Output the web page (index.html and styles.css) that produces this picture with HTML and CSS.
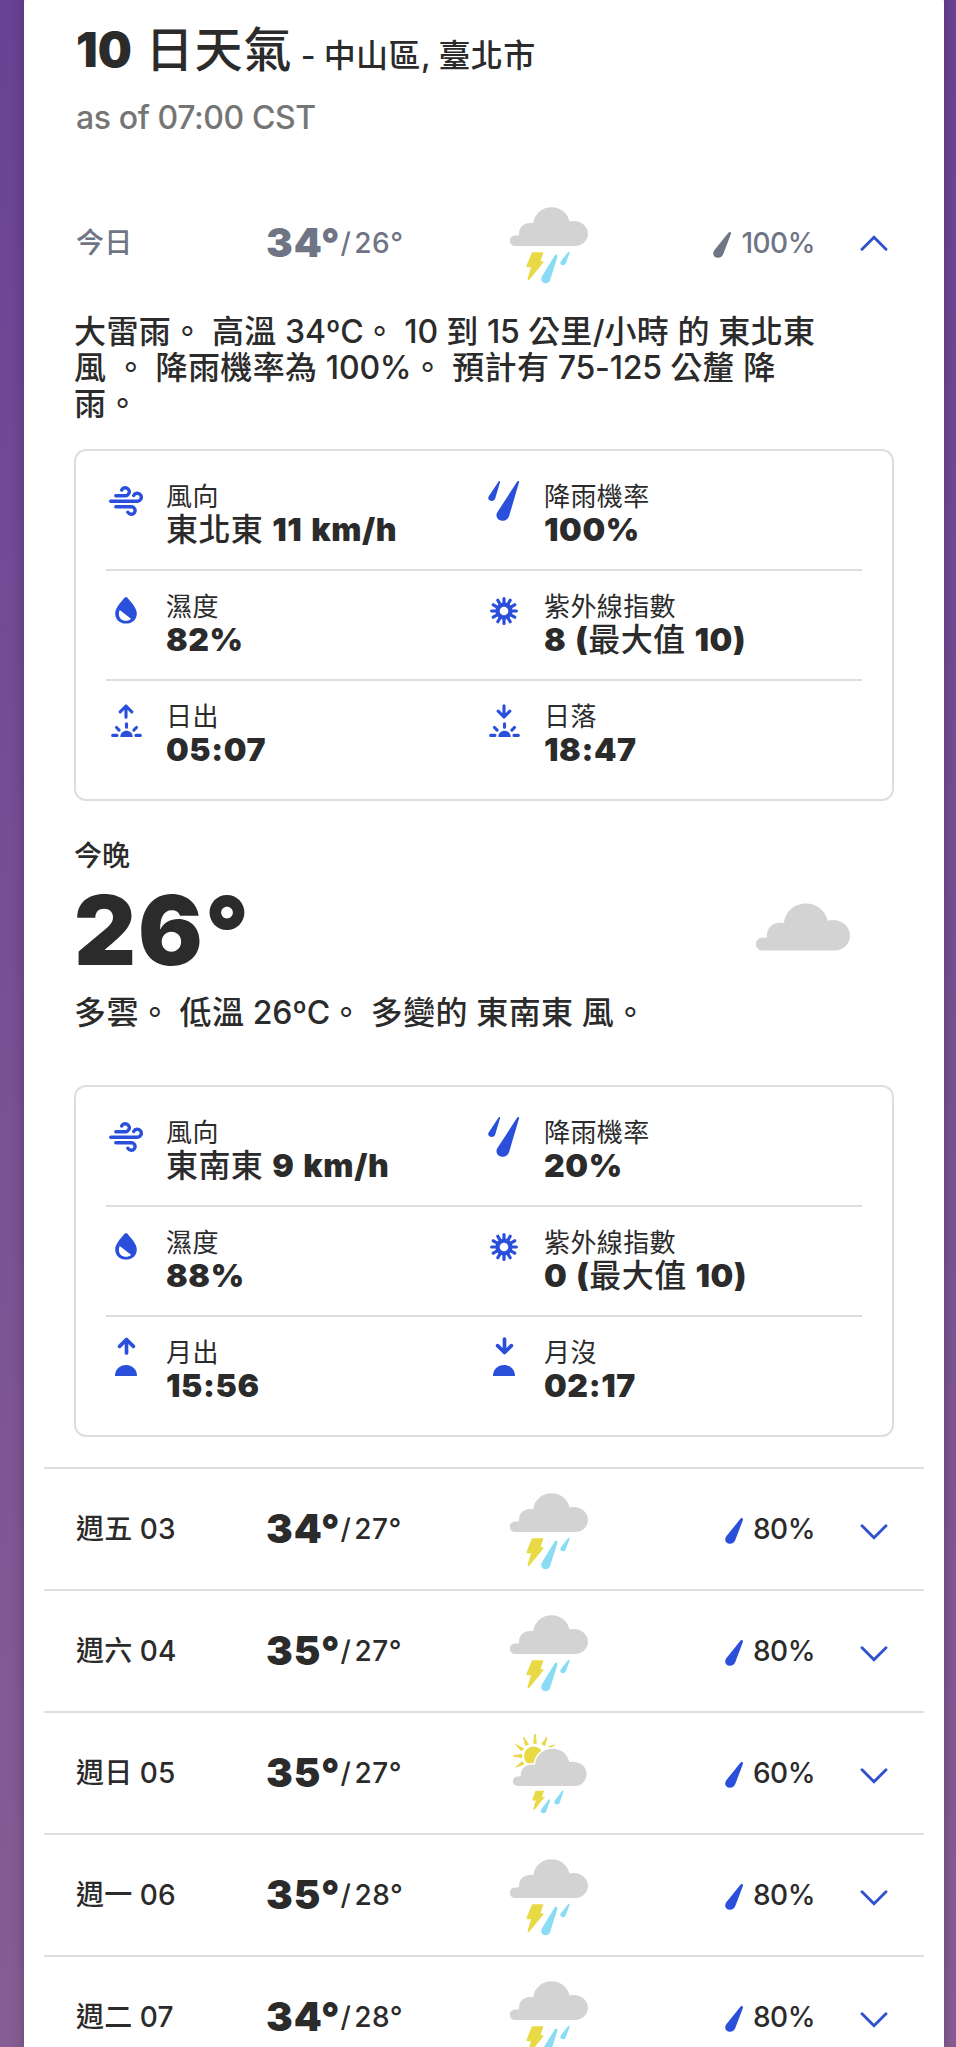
FILE: index.html
```html
<!DOCTYPE html>
<html lang="zh-TW">
<head>
<meta charset="utf-8">
<title>10 日天氣</title>
<link rel="stylesheet" href="styles.css">
</head>
<body>
<svg class="sprite" aria-hidden="true">
  <symbol id="i-storm" viewBox="0 0 78 78">
    <path class="c-cloud" d="M5 39a5.200 5.200 0 0 1 0-10.400c1 0 3-.5 4.200-.3C8 20.500 14 14.600 23.300 16.300 24 7.500 31.500.2 41.500.2c9 0 16 5.600 18 14.200C69.500 12 78 18.500 78 26.600 78 33.500 72.500 39 65.500 39z"/>
    <path class="c-bolt" d="M21.500 46.500a1.500 1.500 0 0 1 1.500-1.200h10.500l-3 9h2.200c.8 0 1 .8.500 1.500L19.500 72.500c-1 1.200-2.200.6-1.900-.8l3.400-11.500h-3c-1.200 0-1.700-.8-1.400-1.800z"/>
    <path class="c-rain" d="M47.300 50.200c.5-3-1.700-3.300-2.800-1.500L32 69.200c-2 3.600.2 7 3.600 7 2.200 0 3.700-1.200 4.500-3.300z"/>
    <path class="c-rain" d="M59.600 46c.3-1.600-1-1.700-1.600-.7L51 54c-1.500 2.200-.3 4.200 2 4.200 1.400 0 2.200-.7 2.700-1.800z"/>
  </symbol>
  <symbol id="i-sunstorm" viewBox="0 0 78 82">
    <g class="c-bolt">
      <circle cx="23.500" cy="22" r="9.500"/>
      <path d="M23.800 9.500h2.400L25.500.5h-1zM13.500 3l2 8.500 3-1.200zM36.800 3l-5 7 3 1.600zM5.500 10.500l6 6.500 2-2.400zM3 22l8.700 1.500v-3.200zM5.700 33.200l8.300-3-1.800-2.600zM44.500 11l-6 1.600 2 1z" stroke="#e8da45" stroke-width="1"/>
    </g>
    <path fill="#d3d3d3" stroke="#fff" stroke-width="3" paint-order="stroke" d="M7.500 52a4.700 4.700 0 0 1 0-9.400c1 0 2.200-.4 3.400-.3C10 35 16 29.200 25 30.800 26 21 33.500 14.800 42.500 14.800c8.500 0 15 5.200 16.800 13.300C68.800 26 76.600 32 76.600 39.800 76.600 46.800 71.500 52 65 52z"/>
    <path class="c-bolt" d="M25.500 56.800h8.500l-2 6.200h2.800L24.500 75.800l-1.400-.6 2.800-8.700h-3.900z"/>
    <path class="c-rain" d="M40.100 66.500c.3-1.600-1-1.700-1.600-.7L31.500 75c-1.500 2.200-.3 4.200 2 4.200 1.400 0 2.200-.7 2.700-1.800zM53.500 57.800c.3-1.600-1-1.700-1.600-.7L45 66.300c-1.500 2.200-.3 4.200 2 4.200 1.400 0 2.200-.7 2.700-1.800z"/>
  </symbol>
  <symbol id="i-cloud" viewBox="0 0 78 39.200">
    <path class="c-cloud" d="M5 39a5.200 5.200 0 0 1 0-10.400c1 0 3-.5 4.200-.3C8 20.500 14 14.600 23.300 16.300 24 7.500 31.500.2 41.500.2c9 0 16 5.600 18 14.200C69.500 12 78 18.500 78 26.600 78 33.500 72.500 39 65.500 39z"/>
  </symbol>
  <symbol id="i-drop" viewBox="0 0 18 26">
    <path fill="currentColor" d="M17.900 2c.5-2-1.500-2.600-2.700-.9L1.300 18.200C-1.200 22 .8 25.700 5 25.700c2.700 0 4.300-1.300 5.300-3.700z"/>
  </symbol>
  <symbol id="i-rain" viewBox="0 0 32 40">
    <path fill="currentColor" d="M31.100 1.200c.3-1.400-1.200-1.600-1.900-.6L9.300 31.300c-2.400 4 .5 8.500 5.500 8.500 3 0 5.300-1.700 6.300-4.700zM12.100 1c.2-1.100-1-1.100-1.500-.5L.8 15.200c-1.600 2.400.1 4.800 2.900 4.800 1.800 0 3-.9 3.500-2.400z"/>
  </symbol>
  <symbol id="i-wind" viewBox="0 0 34 30">
    <g fill="none" stroke="currentColor" stroke-width="3.400" stroke-linecap="round">
      <path d="M6.800 9.800h9.700a4 4 0 1 0-3.800-5.800"/>
      <path d="M1.700 15.200h26.800a4 4 0 1 0-3.800-5.800"/>
      <path d="M6.800 20.700h15.700a3.800 3.800 0 1 1-3.600 5.600"/>
    </g>
  </symbol>
  <symbol id="i-humid" viewBox="0 0 22 27">
    <path fill="currentColor" fill-rule="evenodd" d="M9.800.6c.7-.8 1.700-.8 2.400 0C16 5.200 21.800 11 21.800 16.400 21.800 22.500 17 26.600 11 26.600S.2 22.500.2 16.400C.2 11 6 5.200 9.800.6zM4.700 13c-2.300 6.200.8 10.800 6.300 10.800 2 0 3.800-.7 5-2.100z"/>
  </symbol>
  <symbol id="i-uv" viewBox="-14 -14 28 28">
    <g stroke="currentColor" stroke-width="3.200" stroke-linecap="round">
      <path d="M0-12.400V12.400M-12.400 0H12.400M6.200-10.700L-6.200 10.700M10.700-6.200L-10.700 6.200M6.200 10.700L-6.200-10.700M10.700 6.200L-10.700-6.200"/>
    </g>
    <circle r="8.600" fill="currentColor"/><circle r="4.300" fill="#fff"/>
  </symbol>
  <symbol id="i-half" viewBox="0 0 31 15">
    <g fill="none" stroke="currentColor" stroke-width="3.100" stroke-linecap="round">
      <path d="M1.700 13.400h4.300M25 13.400h4.300M5.500 5.500l2.600 2.600M25.500 5.500l-2.600 2.600M15.500 1.700v3.600"/>
    </g>
    <path fill="currentColor" d="M9.300 15c0-4 3-6.200 6.200-6.200s6.200 2.200 6.200 6.200z"/>
  </symbol>
  <symbol id="i-up" viewBox="0 0 16 15">
    <path fill="none" stroke="currentColor" stroke-width="3.100" stroke-linecap="round" stroke-linejoin="round" d="M8 13.300V2M2.200 7.800L8 2l5.800 5.800"/>
  </symbol>
  <symbol id="i-down" viewBox="0 0 16 15">
    <path fill="none" stroke="currentColor" stroke-width="3.100" stroke-linecap="round" stroke-linejoin="round" d="M8 1.700V13M2.200 7.200L8 13l5.800-5.800"/>
  </symbol>
  <symbol id="i-moon" viewBox="0 0 22 11">
    <path fill="currentColor" d="M0 11C0 4 5 0 11 0s11 4 11 11z"/>
  </symbol>
  <symbol id="i-chev" viewBox="0 0 28 16">
    <path fill="none" stroke="currentColor" stroke-width="2.900" stroke-linecap="round" stroke-linejoin="miter" d="M2 1.800l12 12 12-12"/>
  </symbol>
</svg>

<main class="card">
  <header class="head">
    <h1 class="title">10 <span class="t-cjk">日天氣</span><span class="place"> - <b class="cjk">中山區</b>, <b class="cjk">臺北市</b></span></h1>
    <p class="asof">as of 07:00 CST</p>
  </header>

  <section class="row row-today">
    <h2 class="day"><b class="cjk">今日</b></h2>
    <div class="temp"><span class="hi">34°</span><span class="slash">/</span><span class="lo">26°</span></div>
    <svg class="wx"><use href="#i-storm"/></svg>
    <div class="precip"><svg class="drop"><use href="#i-drop"/></svg>100%</div>
    <svg class="chev chev-up"><use href="#i-chev"/></svg>
  </section>

  <p class="desc"><b class="cjk">大雷雨。</b> <b class="cjk">高溫</b> 34ºC<b class="cjk">。</b> 10 <b class="cjk">到</b> 15 <b class="cjk">公里</b>/<b class="cjk">小時</b> <b class="cjk">的</b> <b class="cjk">東北東</b><br><b class="cjk">風</b> <b class="cjk">。</b> <b class="cjk">降雨機率為</b> 100%<b class="cjk">。</b> <b class="cjk">預計有</b> 75-125 <b class="cjk">公釐</b> <b class="cjk">降</b><br><b class="cjk">雨。</b></p>

  <div class="box">
    <div class="pair">
      <div class="item"><span class="ico"><svg class="wind"><use href="#i-wind"/></svg></span><div><div class="label">風向</div><div class="value"><b class="cjk">東北東</b> 11 km/h</div></div></div>
      <div class="item"><span class="ico ico-rain"><svg class="rain"><use href="#i-rain"/></svg></span><div><div class="label">降雨機率</div><div class="value">100%</div></div></div>
    </div>
    <div class="pair">
      <div class="item"><span class="ico ico-mid"><svg class="humid"><use href="#i-humid"/></svg></span><div><div class="label">濕度</div><div class="value">82%</div></div></div>
      <div class="item"><span class="ico ico-mid"><svg class="uv"><use href="#i-uv"/></svg></span><div><div class="label">紫外線指數</div><div class="value">8 (<b class="cjk">最大值</b> 10)</div></div></div>
    </div>
    <div class="pair">
      <div class="item"><span class="ico ico-sun"><svg class="arrow"><use href="#i-up"/></svg><svg class="half"><use href="#i-half"/></svg></span><div><div class="label">日出</div><div class="value">05:07</div></div></div>
      <div class="item"><span class="ico ico-sun"><svg class="arrow"><use href="#i-down"/></svg><svg class="half"><use href="#i-half"/></svg></span><div><div class="label">日落</div><div class="value">18:47</div></div></div>
    </div>
  </div>

  <section class="tonight">
    <div class="tonight-main">
      <h2 class="tonight-name">今晚</h2>
      <div class="big">26°</div>
    </div>
    <svg class="cloud"><use href="#i-cloud"/></svg>
  </section>
  <p class="desc desc-night"><b class="cjk">多雲。</b> <b class="cjk">低溫</b> 26ºC<b class="cjk">。</b> <b class="cjk">多變的</b> <b class="cjk">東南東</b> <b class="cjk">風。</b></p>

  <div class="box box-night">
    <div class="pair">
      <div class="item"><span class="ico"><svg class="wind"><use href="#i-wind"/></svg></span><div><div class="label">風向</div><div class="value"><b class="cjk">東南東</b> 9 km/h</div></div></div>
      <div class="item"><span class="ico ico-rain"><svg class="rain"><use href="#i-rain"/></svg></span><div><div class="label">降雨機率</div><div class="value">20%</div></div></div>
    </div>
    <div class="pair">
      <div class="item"><span class="ico ico-mid"><svg class="humid"><use href="#i-humid"/></svg></span><div><div class="label">濕度</div><div class="value">88%</div></div></div>
      <div class="item"><span class="ico ico-mid"><svg class="uv"><use href="#i-uv"/></svg></span><div><div class="label">紫外線指數</div><div class="value">0 (<b class="cjk">最大值</b> 10)</div></div></div>
    </div>
    <div class="pair">
      <div class="item"><span class="ico ico-moon"><svg class="arrow-lg"><use href="#i-up"/></svg><svg class="moon"><use href="#i-moon"/></svg></span><div><div class="label">月出</div><div class="value">15:56</div></div></div>
      <div class="item"><span class="ico ico-moon"><svg class="arrow-lg"><use href="#i-down"/></svg><svg class="moon"><use href="#i-moon"/></svg></span><div><div class="label">月沒</div><div class="value">02:17</div></div></div>
    </div>
  </div>

  <div class="days">
    <section class="row"><h2 class="day"><b class="cjk">週五</b> 03</h2><div class="temp"><span class="hi">34°</span><span class="slash">/</span><span class="lo">27°</span></div><svg class="wx"><use href="#i-storm"/></svg><div class="precip"><svg class="drop"><use href="#i-drop"/></svg>80%</div><svg class="chev"><use href="#i-chev"/></svg></section>
    <section class="row"><h2 class="day"><b class="cjk">週六</b> 04</h2><div class="temp"><span class="hi">35°</span><span class="slash">/</span><span class="lo">27°</span></div><svg class="wx"><use href="#i-storm"/></svg><div class="precip"><svg class="drop"><use href="#i-drop"/></svg>80%</div><svg class="chev"><use href="#i-chev"/></svg></section>
    <section class="row"><h2 class="day"><b class="cjk">週日</b> 05</h2><div class="temp"><span class="hi">35°</span><span class="slash">/</span><span class="lo">27°</span></div><svg class="wx wx-sun"><use href="#i-sunstorm"/></svg><div class="precip"><svg class="drop"><use href="#i-drop"/></svg>60%</div><svg class="chev"><use href="#i-chev"/></svg></section>
    <section class="row"><h2 class="day"><b class="cjk">週一</b> 06</h2><div class="temp"><span class="hi">35°</span><span class="slash">/</span><span class="lo">28°</span></div><svg class="wx"><use href="#i-storm"/></svg><div class="precip"><svg class="drop"><use href="#i-drop"/></svg>80%</div><svg class="chev"><use href="#i-chev"/></svg></section>
    <section class="row"><h2 class="day"><b class="cjk">週二</b> 07</h2><div class="temp"><span class="hi">34°</span><span class="slash">/</span><span class="lo">28°</span></div><svg class="wx"><use href="#i-storm"/></svg><div class="precip"><svg class="drop"><use href="#i-drop"/></svg>80%</div><svg class="chev"><use href="#i-chev"/></svg></section>
  </div>
</main>
</body>
</html>
```
FILE: styles.css
```css
* { box-sizing: border-box; margin: 0; padding: 0; }
html, body { height: 2047px; overflow: hidden; }
body {
  background: linear-gradient(#6a4295, #865e94);
  font-family: Inter, "Noto Sans CJK TC", sans-serif;
  color: #2b2b2b;
}
.sprite { position: absolute; width: 0; height: 0; }
svg { display: block; flex: none; }
.c-cloud { fill: #d3d3d3; }
.c-bolt { fill: #e8da45; }
.c-rain { fill: #8adcf5; }

.card {
  margin: -6px 12px 0 24px;
  height: 2060px;
  padding-top: 6px;
  background: #fff;
  border-radius: 8px;
  box-shadow: 0 0 14px rgba(0, 0, 0, .25);
}
.cjk { font-weight: 500; letter-spacing: .4px; }

.head { height: 182px; padding: 20px 0 0 52px; white-space: nowrap; }
.title { font-size: 48px; line-height: 60px; font-weight: 900; }
.t-cjk { font-weight: 500; letter-spacing: 1px; margin-left: 4px; }
.place { font-size: 32px; font-weight: 500; white-space: pre; letter-spacing: -.2px; }
.asof { margin-top: 12px; font-size: 32px; line-height: 40px; font-weight: 550; letter-spacing: -.4px; color: #757575; }

.row {
  height: 122px;
  margin: 0 20px;
  padding: 0 36px 0 32px;
  border-top: 2px solid #dedede;
  display: grid;
  grid-template-columns: 190px 244px 110px 195px 1fr;
  white-space: nowrap;
}
.row-today { border-color: transparent; color: #6f7585; }
.day { font-size: 28px; line-height: 40px; font-weight: 550; margin-top: 39px; }
.day .cjk { letter-spacing: .2px; }
.temp { display: flex; align-items: baseline; margin-top: 34px; height: 50px; }
.hi { font-size: 40px; line-height: 50px; font-weight: 900; letter-spacing: 1px; }
.slash, .lo { font-size: 28px; font-weight: 550; letter-spacing: .5px; position: relative; top: -4px; }
.slash { margin: 0 3px 0 0; }
.wx { width: 78px; height: 78px; margin-top: 23px; }
.wx-sun { height: 82px; margin-top: 20px; }
.precip { display: flex; justify-content: flex-end; gap: 10px; font-size: 28px; line-height: 40px; font-weight: 550; letter-spacing: -.5px; margin-top: 39px; }
.drop { width: 18px; height: 26px; margin-top: 9px; color: #2a4fdb; }
.row-today .drop { color: inherit; }
.chev { width: 28px; height: 16px; margin-top: 54px; justify-self: end; color: #2f52cc; }
.chev-up { transform: scaleY(-1); margin-top: 51px; }

.desc { margin: 10px 0 0 50px; font-size: 32px; line-height: 36px; font-weight: 550; letter-spacing: -.2px; white-space: nowrap; }
.desc-night { margin-top: 9px; }

.box {
  width: 820px;
  height: 352px;
  margin: 27px 0 0 50px;
  padding: 10px 30px 0;
  border: 2px solid #dedede;
  border-radius: 12px;
}
.box-night { margin-top: 54px; }
.pair { display: grid; grid-template-columns: 1fr 1fr; height: 110px; border-bottom: 2px solid #dedede; }
.pair:last-child { border-bottom: 0; }
.item { display: flex; gap: 20px; padding-top: 19px; }
.ico { width: 40px; display: flex; flex-direction: column; align-items: center; padding-top: 6px; color: #2a4fdb; }
.label { font-size: 26px; line-height: 34px; font-weight: 400; letter-spacing: .4px; white-space: nowrap; }
.value { font-size: 32px; line-height: 34px; font-weight: 900; letter-spacing: .6px; word-spacing: 2px; margin-top: -1px; white-space: nowrap; }
.ico-rain { padding-top: 1px; }
.ico-mid { padding-top: 7px; }
.ico-sun { padding-top: 4px; gap: 3px; }
.ico-moon { padding-top: 1px; gap: 10px; }
.wind { width: 34px; height: 30px; }
.rain { width: 32px; height: 40px; }
.humid { width: 22px; height: 27px; }
.uv { width: 28px; height: 28px; }
.arrow { width: 16px; height: 15px; }
.half { width: 31px; height: 15px; }
.arrow-lg { width: 19px; height: 18px; }
.moon { width: 22px; height: 11px; }

.tonight { display: flex; justify-content: space-between; padding: 37px 94px 0 50px; }
.tonight-name { font-size: 28px; line-height: 36px; font-weight: 500; }
.big { font-size: 96px; line-height: 112px; font-weight: 900; letter-spacing: 2px; }
.cloud { width: 94px; height: 48px; margin-top: 65px; }
.days { margin-top: 30px; }
.days .row > * { position: relative; top: 1px; }
```
